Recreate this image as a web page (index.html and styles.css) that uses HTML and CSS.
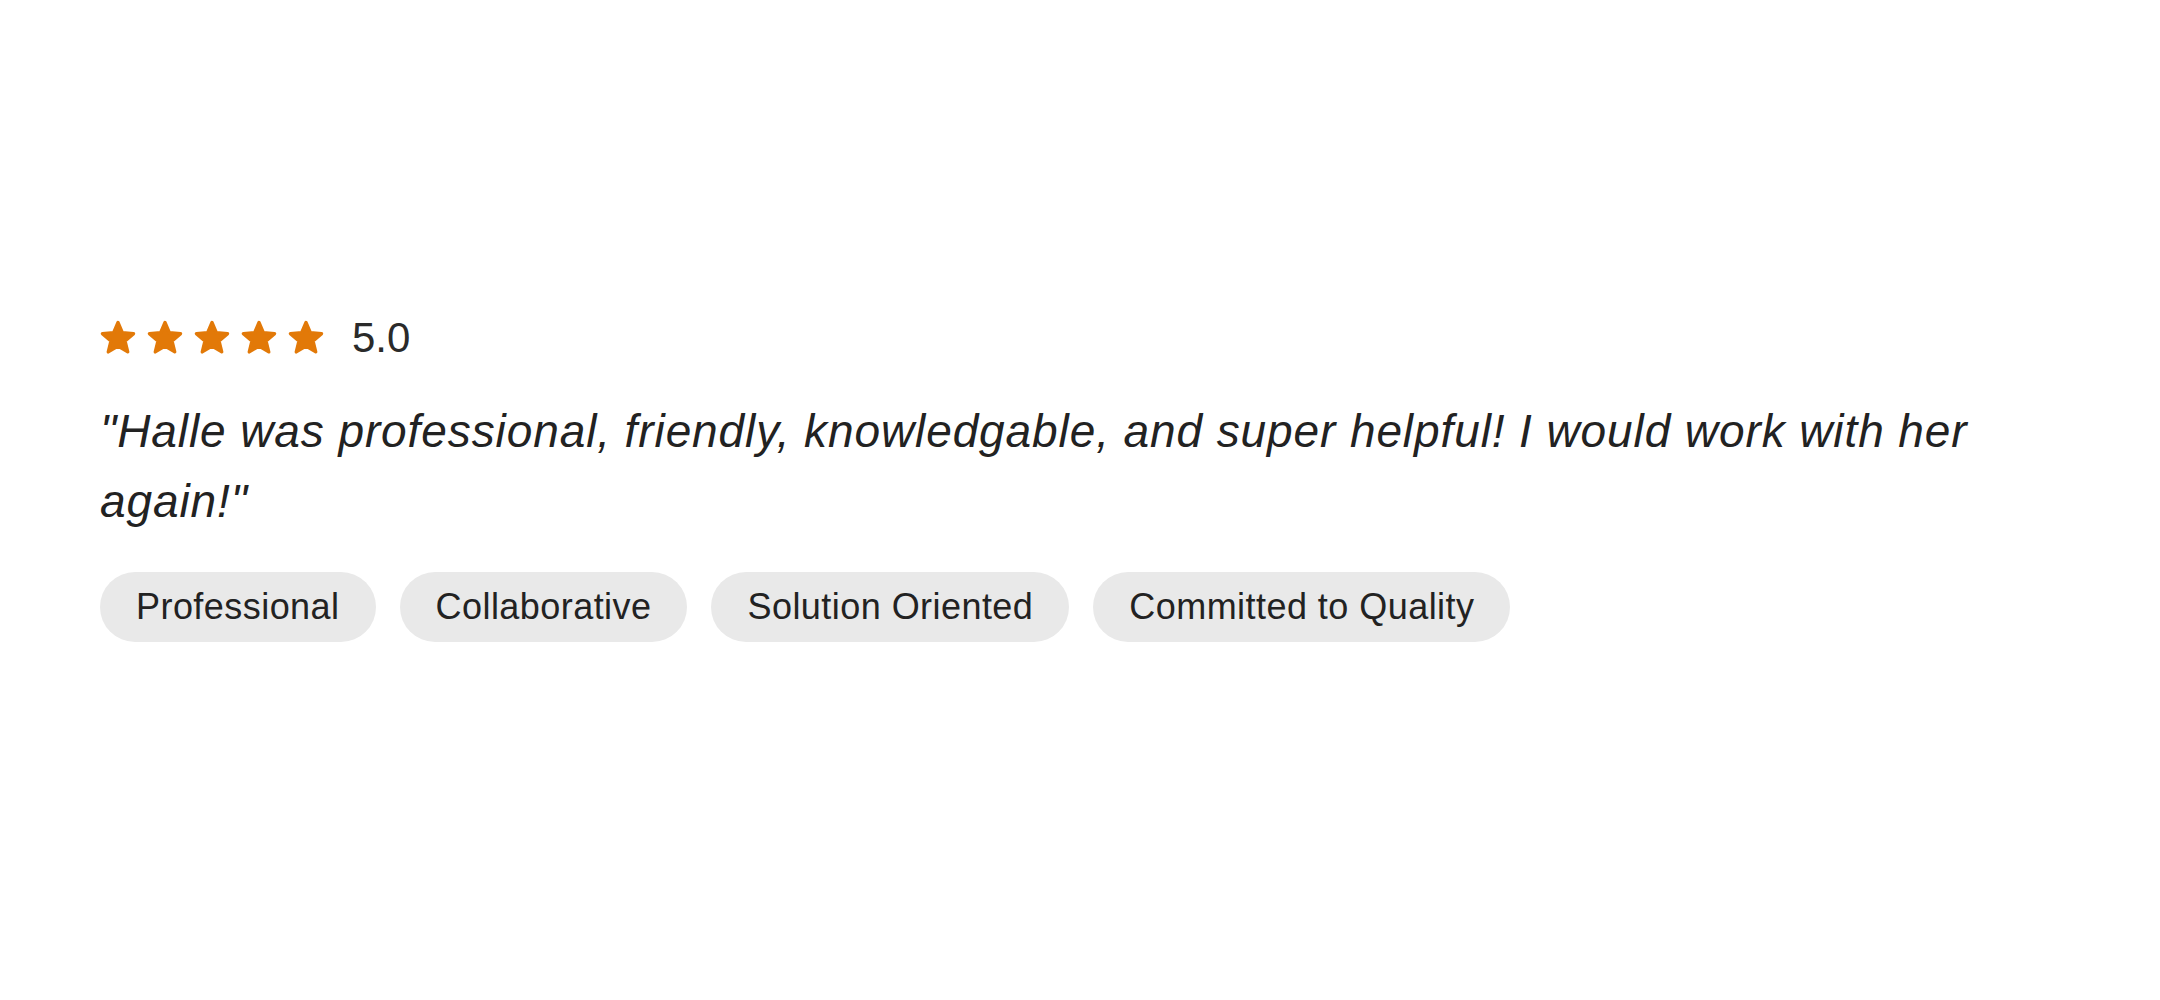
FILE: index.html
```html
<!DOCTYPE html>
<html>
<head>
<meta charset="utf-8">
<link rel="stylesheet" href="styles.css">
</head>
<body>
<div class="review">
  <div class="rating">
    <div class="stars">
      <svg class="star" viewBox="0 0 24 24"><path d="M12 1.6L14.9 8.5L22.4 9.1L16.7 14L18.5 21.3L12 17.4L5.5 21.3L7.3 14L1.6 9.1L9.1 8.5Z"/></svg>
      <svg class="star" viewBox="0 0 24 24"><path d="M12 1.6L14.9 8.5L22.4 9.1L16.7 14L18.5 21.3L12 17.4L5.5 21.3L7.3 14L1.6 9.1L9.1 8.5Z"/></svg>
      <svg class="star" viewBox="0 0 24 24"><path d="M12 1.6L14.9 8.5L22.4 9.1L16.7 14L18.5 21.3L12 17.4L5.5 21.3L7.3 14L1.6 9.1L9.1 8.5Z"/></svg>
      <svg class="star" viewBox="0 0 24 24"><path d="M12 1.6L14.9 8.5L22.4 9.1L16.7 14L18.5 21.3L12 17.4L5.5 21.3L7.3 14L1.6 9.1L9.1 8.5Z"/></svg>
      <svg class="star" viewBox="0 0 24 24"><path d="M12 1.6L14.9 8.5L22.4 9.1L16.7 14L18.5 21.3L12 17.4L5.5 21.3L7.3 14L1.6 9.1L9.1 8.5Z"/></svg>
    </div>
    <span class="score">5.0</span>
  </div>
  <p class="quote">"Halle was professional, friendly, knowledgable, and super helpful! I would work with her again!"</p>
  <ul class="tags">
    <li class="tag">Professional</li>
    <li class="tag">Collaborative</li>
    <li class="tag">Solution Oriented</li>
    <li class="tag">Committed to Quality</li>
  </ul>
</div>
</body>
</html>
```

FILE: styles.css
```css
html, body {
  margin: 0;
  padding: 0;
  background: #ffffff;
}
body {
  font-family: "Liberation Sans", Arial, Helvetica, sans-serif;
  color: #222222;
}
.review {
  padding: 320px 0 0 100px;
  width: 1920px;
}
.rating {
  display: flex;
  align-items: center;
  height: 36px;
}
.stars {
  display: flex;
  gap: 11px;
}
.star {
  width: 36px;
  height: 36px;
  display: block;
}
.star path {
  fill: #e27908;
  stroke: #e27908;
  stroke-width: 2.2;
  stroke-linejoin: round;
}
.score {
  margin-left: 28px;
  font-size: 42px;
  line-height: 36px;
  color: #2a2a2a;
}
.quote {
  margin: 40px 0 0 0;
  font-size: 46px;
  font-style: italic;
  letter-spacing: 0.9px;
  line-height: 70px;
  color: #222222;
}
.tags {
  list-style: none;
  margin: 36px 0 0 0;
  padding: 0;
  display: flex;
  gap: 24px;
}
.tag {
  height: 70px;
  padding: 0 36px;
  border-radius: 35px;
  background: #e9e9e9;
  font-size: 36px;
  letter-spacing: 0.45px;
  line-height: 70px;
  color: #222222;
}
```
